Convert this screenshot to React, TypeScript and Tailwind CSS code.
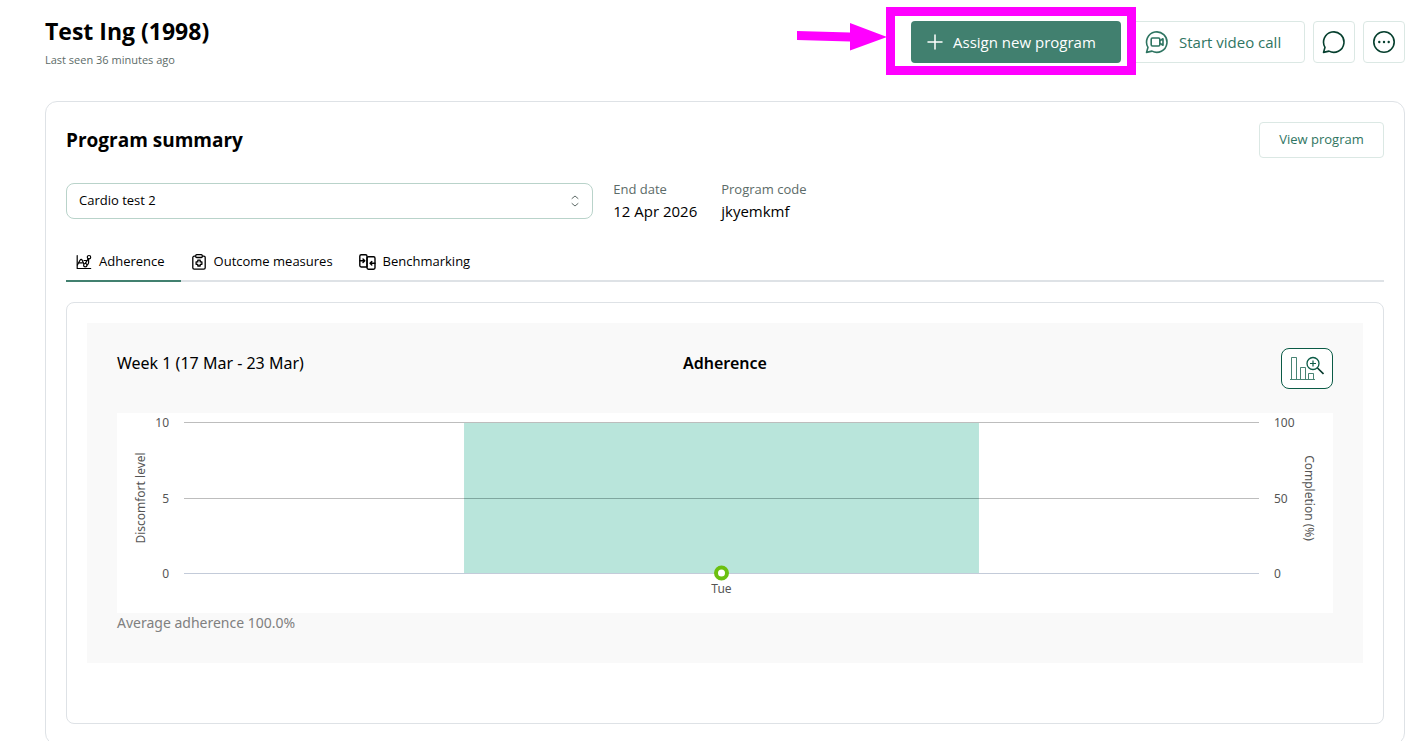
import { useState } from "react";

const tabs = [
  { id: "adherence", label: "Adherence", Icon: TrendIcon },
  { id: "outcome", label: "Outcome measures", Icon: ClipboardIcon },
  { id: "benchmarking", label: "Benchmarking", Icon: CompareIcon },
];

const gridLines = [
  { y: 9, left: "10", right: "100", color: "#bdbdbd" },
  { y: 85, left: "5", right: "50", color: "#bdbdbd" },
  { y: 160, left: "0", right: "0", color: "#c3cbd9" },
];

function TrendIcon() {
  return (
    <svg width="16" height="16" viewBox="0 0 16 16" fill="none" stroke="currentColor" strokeWidth="1.2" strokeLinecap="round" strokeLinejoin="round">
      <path d="M1.2 1.5v13h13.5" />
      <path d="M1.4 11 4 6.200c.6-1 1.700-1 2.200 0l1.600 3.600" />
      <path d="M3 8.800h3.500" />
      <circle cx="9.300" cy="11.200" r="1.700" />
      <circle cx="13" cy="3.200" r="1.700" />
      <path d="M9.300 9.300 12.200 4.800M12.600 5v3.500c0 1.200-.6 2-1.600 2.500M8 6.500h2.500" />
    </svg>
  );
}

function ClipboardIcon() {
  return (
    <svg width="16" height="16" viewBox="0 0 16 16" fill="none" stroke="currentColor" strokeWidth="1.3" strokeLinejoin="round">
      <path d="M4.500 2.200H3.200c-.8 0-1.400.6-1.400 1.400v10.200c0 .8.6 1.400 1.400 1.400h9.600c.8 0 1.400-.6 1.400-1.400V3.600c0-.8-.6-1.400-1.400-1.400h-1.300" />
      <rect x="4.700" y="0.700" width="6.600" height="2.800" rx="1" />
      <path d="M6.800 6.200h2.400v1.700h1.700v2.400H9.200V12H6.800v-1.700H5.100V7.900h1.700z" />
    </svg>
  );
}

function CompareIcon() {
  return (
    <svg width="17" height="16" viewBox="0 0 17 16" fill="none" stroke="currentColor" strokeWidth="1.4" strokeLinecap="round" strokeLinejoin="round">
      <path d="M8 13H2.200C1.400 13 .8 12.400.8 11.600V2.200C.8 1.400 1.400.8 2.200.8h4.400C7.400.8 8 1.400 8 2.200z" />
      <rect x="8" y="2.800" width="8" height="12.400" rx="1.400" />
      <path d="M1 6.800h4.500M4 5l1.800 1.800L4 8.600M16 9.200h-4.800M12.800 7.400 11 9.200l1.800 1.800" />
    </svg>
  );
}

function BubbleIcon({ video }: { video?: boolean }) {
  return (
    <svg width="24" height="24" viewBox="0 0 24 24" fill="none" stroke="currentColor" strokeWidth="1.6" strokeLinecap="round" strokeLinejoin="round">
      <path d="M1.500 22.400 3 17.300A10.200 10.200 0 1 1 7 21.100z" />
      {video && (
        <>
          <rect x="6.200" y="8" width="8.600" height="8" rx="1.200" />
          <path d="m14.800 10.800 3.200-2v6.400l-3.200-2" />
        </>
      )}
    </svg>
  );
}

function MoreIcon() {
  return (
    <svg width="24" height="24" viewBox="0 0 24 24" fill="none" stroke="currentColor" strokeWidth="1.6">
      <circle cx="12" cy="12" r="10.200" />
      <g fill="currentColor" stroke="none">
        <circle cx="7.300" cy="12" r="1.200" />
        <circle cx="12" cy="12" r="1.200" />
        <circle cx="16.700" cy="12" r="1.200" />
      </g>
    </svg>
  );
}

function ZoomChartIcon() {
  return (
    <svg width="34" height="26" viewBox="0 0 34 26" fill="none" stroke="#0b5b46">
      <g strokeWidth="1" strokeOpacity="0.75">
        <path d="M0 23.500h25" />
        <path d="M1.500 23V1.500h5V23M10.500 23V11.500h5V23M18.500 23v-5.500h5V23" />
      </g>
      <circle cx="23" cy="7.500" r="6" strokeWidth="1.300" />
      <path d="M23 4.500v6M20 7.500h6" strokeWidth="1.200" />
      <path d="m27.500 12 6 6" stroke="#06382b" strokeWidth="1.600" />
    </svg>
  );
}

function Highlight() {
  return (
    <>
      <div className="pointer-events-none absolute -top-[14px] -right-[15px] -bottom-[12px] -left-[25px] z-10 border-9 border-[#ff00ff]" />
      <svg className="pointer-events-none absolute top-0 right-full mr-[24px]" width="90" height="32" viewBox="0 0 90 32" fill="#ff00ff">
        <path d="M0 10 53 11.500V2L90 16 53 29.500V20.500L0 19z" />
      </svg>
    </>
  );
}

function AdherenceChart() {
  return (
    <div className="flex h-[200px] bg-white text-[12px] text-[#555]">
      <svg className="h-full w-[67px] shrink-0" fill="currentColor">
        <text transform="translate(28 85) rotate(-90)" textAnchor="middle">Discomfort level</text>
        {gridLines.map((l) => (
          <text key={l.y} x="52" y={l.y + 5} textAnchor="end">{l.left}</text>
        ))}
      </svg>
      <svg className="h-full min-w-0 flex-1 overflow-visible">
        {gridLines.map((l) => (
          <line key={l.y} x1="0" x2="100%" y1={l.y + 0.5} y2={l.y + 0.5} stroke={l.color} />
        ))}
        <rect x="26.05%" y="10" width="47.9%" height="150" fill="#b9e5db" />
        <line x1="26.05%" x2="73.95%" y1="85.5" y2="85.5" stroke="#7fa79f" />
        <circle cx="50%" cy="160" r="5.5" fill="#fff" stroke="#6bc010" strokeWidth="4" />
        <text x="50%" y="180" textAnchor="middle" fill="currentColor">Tue</text>
      </svg>
      <svg className="h-full w-[74px] shrink-0" fill="currentColor">
        {gridLines.map((l) => (
          <text key={l.y} x="15" y={l.y + 5}>{l.right}</text>
        ))}
        <text transform="translate(46 85) rotate(90)" textAnchor="middle">Completion (%)</text>
      </svg>
    </div>
  );
}

export default function App() {
  const [active, setActive] = useState("adherence");

  return (
    <main className="bg-white pt-[21px] pr-[17px] pl-[45px] font-['Segoe_UI','Open_Sans',sans-serif] text-black">
      <header className="flex items-start justify-between">
        <div>
          <h1 className="text-[23px] leading-5 font-bold">Test Ing (1998)</h1>
          <p className="mt-[10px] text-[11px] leading-[18px] text-[#5c6b68]">Last seen 36 minutes ago</p>
        </div>
        <div className="flex gap-2">
          <div className="relative">
            <button type="button" className="flex h-[42px] w-[210px] items-center gap-[9px] rounded bg-[#41806f] pl-[15px] text-[15px] whitespace-nowrap text-white">
              <svg width="18" height="18" viewBox="0 0 18 18" stroke="currentColor" strokeWidth="1.5" strokeLinecap="round">
                <path d="M9 2v14M2 9h14" />
              </svg>
              Assign new program
            </button>
            <Highlight />
          </div>
          <button type="button" className="flex h-[42px] w-[176px] items-center gap-[10px] rounded border border-[#dbe8e4] pl-[15px] text-[15px] whitespace-nowrap text-[#2f7562]">
            <BubbleIcon video />
            Start video call
          </button>
          <button type="button" aria-label="Messages" className="flex size-[42px] items-center justify-center rounded border border-[#dbe8e4] text-[#063f2e]">
            <BubbleIcon />
          </button>
          <button type="button" aria-label="More options" className="flex size-[42px] items-center justify-center rounded border border-[#dbe8e4] text-[#063f2e]">
            <MoreIcon />
          </button>
        </div>
      </header>

      <section className="mt-8 rounded-xl border border-[#dee2e6] p-5">
        <div className="flex items-center justify-between">
          <h2 className="text-[19px] font-bold">Program summary</h2>
          <button type="button" className="h-9 w-[125px] rounded border border-[#dbe8e4] text-[13px] text-[#2f7562]">
            View program
          </button>
        </div>

        <div className="mt-[21px] flex gap-5">
          <div className="relative mt-1 h-9 w-2/5">
            <select aria-label="Program" className="h-full w-full appearance-none rounded-lg border border-[#b9d3ca] bg-white px-3 text-[13px]">
              <option>Cardio test 2</option>
            </select>
            <svg className="pointer-events-none absolute top-3 right-[13px] text-[#5f6b68]" width="10" height="12" viewBox="0 0 10 12" fill="none" stroke="currentColor" strokeLinecap="round" strokeLinejoin="round">
              <path d="M2 3.500 5 1l3 2.500M2 8.500 5 11l3-2.500" />
            </svg>
          </div>
          <dl className="flex gap-6">
            <div>
              <dt className="text-[13px] leading-5 text-[#5c6b68]">End date</dt>
              <dd className="text-[15px] leading-6">12 Apr 2026</dd>
            </div>
            <div>
              <dt className="text-[13px] leading-5 text-[#5c6b68]">Program code</dt>
              <dd className="text-[15px] leading-6">jkyemkmf</dd>
            </div>
          </dl>
        </div>

        <div role="tablist" className="mt-5 flex border-b-2 border-[#dee2e6]">
          {tabs.map(({ id, label, Icon }) => (
            <button
              key={id}
              type="button"
              role="tab"
              aria-selected={active === id}
              onClick={() => setActive(id)}
              className={`-mb-0.5 flex h-[39px] items-center gap-[7px] border-b-2 pr-4 pl-[10px] text-[13px] ${active === id ? "border-[#41806f]" : "border-transparent"}`}
            >
              <Icon />
              {label}
            </button>
          ))}
        </div>

        <div className="mt-5 rounded-lg border border-[#dee2e6] px-5 pt-5 pb-[60px]">
          <div className="bg-[#f9f9f9] px-[30px] pt-[25px] pb-[30px] font-['Noto_Sans',sans-serif]">
            <div className="mb-6 grid grid-cols-3 items-start">
              <p className="pt-[3px] text-[16px]">Week 1 (17 Mar - 23 Mar)</p>
              <h3 className="pt-[3px] text-center text-[16px] font-semibold">Adherence</h3>
              <button type="button" aria-label="Zoom chart" className="flex h-[41px] w-[52px] items-center justify-center justify-self-end rounded-lg border border-[#0b5b46] bg-white">
                <ZoomChartIcon />
              </button>
            </div>
            <AdherenceChart />
            <p className="text-[14px] leading-5 text-[#808080]">Average adherence 100.0%</p>
          </div>
        </div>
      </section>
    </main>
  );
}
